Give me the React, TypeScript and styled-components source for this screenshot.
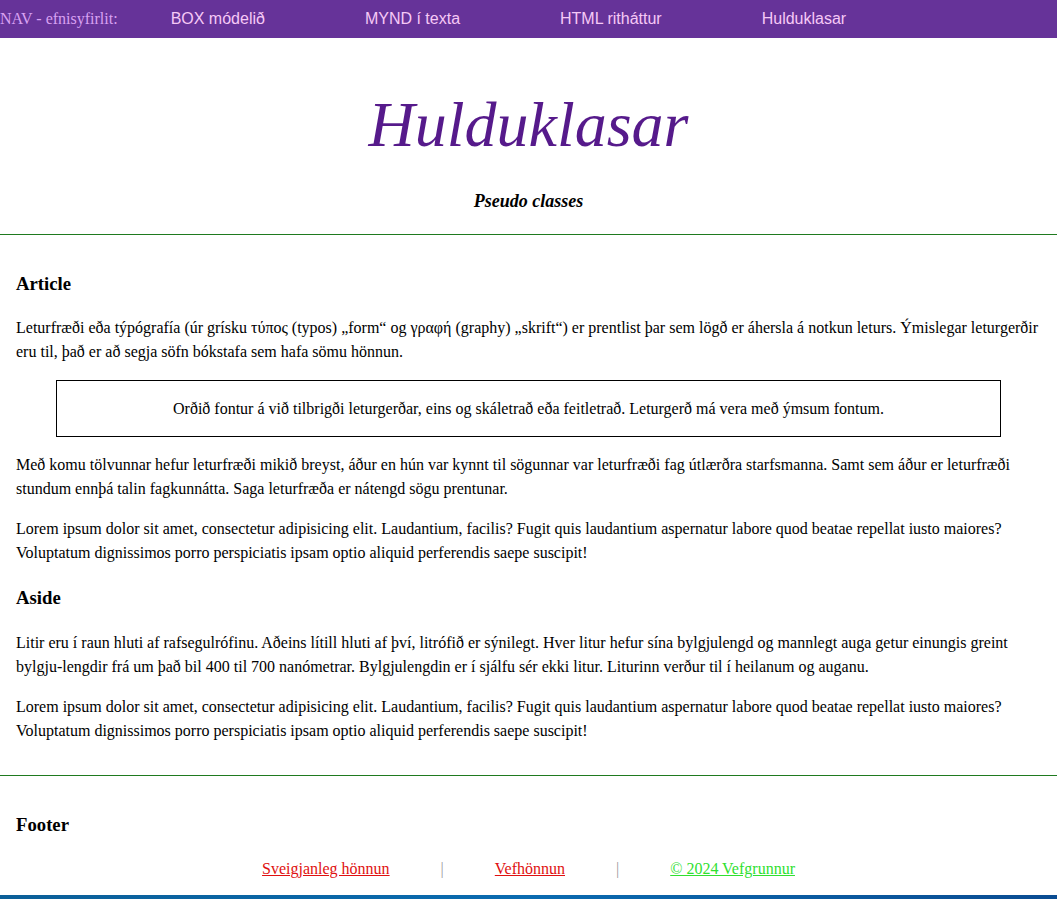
import React from "react";
import styled, { createGlobalStyle } from "styled-components";

const GlobalStyle = createGlobalStyle`
  html, body { margin: 0; padding: 0; background: #ffffff; }
  body {
    font-family: "Liberation Serif", "Times New Roman", serif;
    font-size: 16px;
    line-height: 1.5;
    color: #000;
  }
`;

const Nav = styled.nav`
  display: flex;
  align-items: center;
  height: 38px;
  background: #663399;
  white-space: nowrap;
`;

const NavLabel = styled.span`
  font-family: "Liberation Serif", "Times New Roman", serif;
  font-size: 16px;
  color: #d9a2f2;
  margin-right: 53px;
`;

const NavLink = styled.a`
  font-family: "Liberation Sans", Arial, sans-serif;
  font-size: 16px;
  color: #f6c9f6;
  text-decoration: none;
  margin-right: 100px;
`;

const Header = styled.header`
  text-align: center;
  padding: 48px 16px 21px;
  border-bottom: 1px solid #1f7a1f;
`;

const Title = styled.h1`
  margin: 0;
  font-family: "Liberation Serif", Georgia, serif;
  font-style: italic;
  font-weight: normal;
  font-size: 64px;
  line-height: 78px;
  color: #561a8b;
`;

const Subtitle = styled.p`
  margin: 25px 0 0;
  font-weight: bold;
  font-style: italic;
  font-size: 18px;
  line-height: 24px;
`;

const Section = styled.main<{ $border?: boolean }>`
  padding: 16px;
  border-bottom: ${(p) => (p.$border ? "1px solid #1f7a1f" : "none")};
`;

const H3 = styled.h3`
  font-size: 18.72px;
  line-height: 28px;
  margin: 18.72px 0;
`;

const P = styled.p`
  margin: 16px 0;
`;

const Quote = styled.blockquote`
  margin: 16px 40px;
  padding: 15.5px 16px;
  border: 1px solid #000;
  text-align: center;
`;

const Footer = styled.footer`
  padding: 16px 16px 0;
`;

const LinkRow = styled.div`
  display: flex;
  justify-content: center;
  align-items: center;
  padding-bottom: 14px;
`;

const FootLink = styled.a<{ $color: string }>`
  color: ${(p) => p.$color};
  text-decoration: underline;
`;

const Sep = styled.span`
  color: #9a9a9a;
  margin: 0 51px;
`;

const BottomBar = styled.div`
  height: 20px;
  background: linear-gradient(90deg, #0b5f98, #0a6bb0 50%, #0a4c92);
`;

export default function App() {
  return (
    <>
      <GlobalStyle />
      <Nav>
        <NavLabel>NAV - efnisyfirlit:</NavLabel>
        <NavLink href="#">BOX módelið</NavLink>
        <NavLink href="#">MYND í texta</NavLink>
        <NavLink href="#">HTML ritháttur</NavLink>
        <NavLink href="#">Hulduklasar</NavLink>
      </Nav>
      <Header>
        <Title>Hulduklasar</Title>
        <Subtitle>Pseudo classes</Subtitle>
      </Header>
      <Section $border>
        <article>
          <H3>Article</H3>
          <P>
            Leturfræði eða týpógrafía (úr grísku τύπος (typos) „form“ og γραφή (graphy) „skrift“) er prentlist
            þar sem lögð er áhersla á notkun leturs. Ýmislegar leturgerðir eru til, það er að segja söfn bókstafa
            sem hafa sömu hönnun.
          </P>
          <Quote>
            Orðið fontur á við tilbrigði leturgerðar, eins og skáletrað eða feitletrað. Leturgerð má vera með
            ýmsum fontum.
          </Quote>
          <P>
            Með komu tölvunnar hefur leturfræði mikið breyst, áður en hún var kynnt til sögunnar var leturfræði fag
            útlærðra starfsmanna. Samt sem áður er leturfræði stundum ennþá talin fagkunnátta. Saga leturfræða er
            nátengd sögu prentunar.
          </P>
          <P>
            Lorem ipsum dolor sit amet, consectetur adipisicing elit. Laudantium, facilis? Fugit quis laudantium
            aspernatur labore quod beatae repellat iusto maiores? Voluptatum dignissimos porro perspiciatis ipsam
            optio aliquid perferendis saepe suscipit!
          </P>
        </article>
        <aside>
          <H3>Aside</H3>
          <P>
            Litir eru í raun hluti af rafsegulrófinu. Aðeins lítill hluti af því, litrófið er sýnilegt. Hver litur
            hefur sína bylgjulengd og mannlegt auga getur einungis greint bylgju-lengdir frá um það bil 400 til 700
            nanómetrar. Bylgjulengdin er í sjálfu sér ekki litur. Liturinn verður til í heilanum og auganu.
          </P>
          <P>
            Lorem ipsum dolor sit amet, consectetur adipisicing elit. Laudantium, facilis? Fugit quis laudantium
            aspernatur labore quod beatae repellat iusto maiores? Voluptatum dignissimos porro perspiciatis ipsam
            optio aliquid perferendis saepe suscipit!
          </P>
        </aside>
      </Section>
      <Footer>
        <H3>Footer</H3>
        <LinkRow>
          <FootLink href="#" $color="#e01010">Sveigjanleg hönnun</FootLink>
          <Sep>|</Sep>
          <FootLink href="#" $color="#e01010">Vefhönnun</FootLink>
          <Sep>|</Sep>
          <FootLink href="#" $color="#2fe02f">© 2024 Vefgrunnur</FootLink>
        </LinkRow>
      </Footer>
      <BottomBar />
    </>
  );
}
